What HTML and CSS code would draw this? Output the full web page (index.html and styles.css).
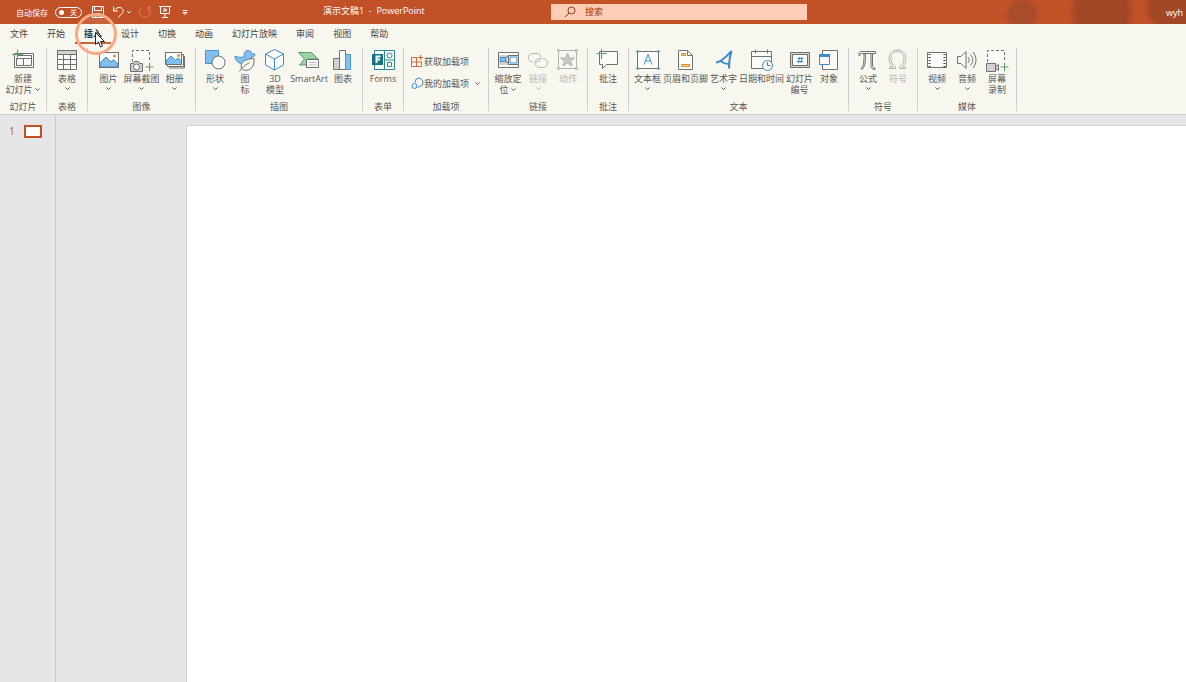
FILE: index.html
```html
<!DOCTYPE html>
<html lang="zh-CN">
<head>
<meta charset="utf-8">
<title>演示文稿1 - PowerPoint</title>
<link rel="stylesheet" href="styles.css">
</head>
<body>
<header class="titlebar">
  <div class="quick">
    <label class="autosave">自动保存
      <span class="switch"><input type="checkbox" class="switch-input"><span class="switch-text">关</span></span>
    </label>
    <button class="qbtn" aria-label="保存"><svg width="14" height="14" viewBox="0 0 14 14"><path d="M1.500 1.500h11v11h-11zM3.500 1.500v4h7v-4M4.500 12.500v-4h5v4M6.500 10.500v2"/></svg></button>
    <button class="qbtn" aria-label="撤消"><svg width="14" height="14" viewBox="0 0 14 14"><path d="M2.500 1.500v4.500h4.500M2.500 6C5 2.500 9 1.500 11 3.500c2.500 2.500 1 4.500-4 9"/></svg></button>
    <button class="qbtn slim" aria-label="撤消选项"><svg width="6" height="14" viewBox="0 0 6 14"><path d="M1 6l2 2 2-2"/></svg></button>
    <button class="qbtn faded" aria-label="恢复"><svg width="14" height="14" viewBox="0 0 14 14"><path d="M3.500 2.500A5.500 5.500 0 1 0 10.500 2.500M10 6V2h3"/></svg></button>
    <button class="qbtn" aria-label="从头开始"><svg width="14" height="14" viewBox="0 0 14 14"><path d="M1 1.500h12M2.500 1.500v7h9v-7M7 8.500v4M4 12.500h6M6 3.500v3l3-1.500z"/></svg></button>
    <button class="qbtn" aria-label="自定义快速访问工具栏"><svg width="8" height="14" viewBox="0 0 8 14"><path d="M1.500 5.500h5M2 7.500l2 2 2-2z"/></svg></button>
  </div>
  <h1 class="doc-title">演示文稿1 &nbsp;- &nbsp;PowerPoint</h1>
  <div class="search">
    <svg width="12" height="12" viewBox="0 0 12 12"><circle cx="7.500" cy="4.500" r="3.500"/><path d="M5 7L1 11"/></svg>
    <input class="search-input" type="text" placeholder="搜索" aria-label="搜索">
  </div>
  <div class="account"><span>wyh</span></div>
</header>

<nav class="tabs">
  <button class="tab">文件</button>
  <button class="tab">开始</button>
  <button class="tab active">插入</button>
  <button class="tab">设计</button>
  <button class="tab">切换</button>
  <button class="tab">动画</button>
  <button class="tab">幻灯片放映</button>
  <button class="tab">审阅</button>
  <button class="tab">视图</button>
  <button class="tab">帮助</button>
</nav>

<div class="ribbon">
  <section class="group single">
    <div class="tools">
      <button class="tool"><svg class="icon" viewBox="0 0 24 24"><path class="w" d="M3.500 4.500h19v14h-19z"/><path d="M6 6.500h14.500v10h-15V9M6 9.500h14.500M12.500 9.500v7"/><path class="green" d="M6.500 .500v10M1 5.500h11"/></svg><span>新建<br>幻灯片<svg class="chev" viewBox="0 0 7 5"><path d="M1.500 1.500l2 2 2-2"/></svg></span></button>
    </div>
    <h2 class="caption">幻灯片</h2>
  </section>
  <section class="group">
    <div class="tools">
      <button class="tool"><svg class="icon" viewBox="0 0 24 24"><path class="w" d="M2.500 1.500h19v19h-19z"/><path class="gray" d="M2.500 1.500h19v4h-19z"/><path d="M2.500 10.500h19M2.500 15.500h19M8.500 5.500v15M15.500 5.500v15"/></svg><span>表格</span><svg class="chev" viewBox="0 0 7 5"><path d="M1.500 1.500l2 2 2-2"/></svg></button>
    </div>
    <h2 class="caption">表格</h2>
  </section>
  <section class="group">
    <div class="tools">
      <button class="tool med"><svg class="icon" viewBox="0 0 24 24"><path class="w" d="M2.500 3.500h19v15h-19z"/><path class="sky" d="M3 14l6-6 5 5 2.500-2.500L21 15v3H3z"/><path d="M2.500 3.500h19v15h-19z"/><circle class="dot" cx="17.500" cy="7" r="1.500"/></svg><span>图片</span><svg class="chev" viewBox="0 0 7 5"><path d="M1.500 1.500l2 2 2-2"/></svg></button>
      <button class="tool med"><svg class="icon" viewBox="0 0 24 24"><path class="dash" d="M2.500 13V1.500h17V13"/><path class="gray" d="M.5 14.500h3l1-2h4l1 2h3v8H.5z"/><circle class="w" cx="6.500" cy="18" r="3"/><path class="green" d="M19.500 14v8M15.500 18h8"/></svg><span>屏幕截图</span><svg class="chev" viewBox="0 0 7 5"><path d="M1.500 1.500l2 2 2-2"/></svg></button>
      <button class="tool med"><svg class="icon" viewBox="0 0 24 24"><path class="w" d="M2.500 3.500h16v12h-16z"/><path class="sky" d="M3 12l5-5 4.500 4.500L15 9l3.500 3.500v3H3z"/><path d="M2.500 3.500h16v12h-16zM18.500 5.500h2v12h-16v-2M20.500 7.500h1v11.500h-15v-1.500"/><circle class="dot" cx="15.500" cy="6.500" r="1.500"/></svg><span>相册</span><svg class="chev" viewBox="0 0 7 5"><path d="M1.500 1.500l2 2 2-2"/></svg></button>
    </div>
    <h2 class="caption">图像</h2>
  </section>
  <section class="group">
    <div class="tools">
      <button class="tool"><svg class="icon" viewBox="0 0 24 24"><path class="skyline" d="M2.500 1.500h13v13h-13z"/><circle class="w" cx="15.500" cy="13.500" r="6.500"/></svg><span>形状</span><svg class="chev" viewBox="0 0 7 5"><path d="M1.500 1.500l2 2 2-2"/></svg></button>
      <button class="tool"><svg class="icon" viewBox="0 0 24 24"><path class="skyline" d="M2 7c3 1.500 6 1.500 9.500 1-1.500-3.500.5-6.500 3.500-6.500 2.500 0 3.500 1.500 4 3.500h3c0 2-1.500 3-3.500 3 0 4-2.500 7-7 7C5.500 15 2 12 2 7z"/><path class="w" d="M8.500 19c-2-6 4-9 12.500-9.500 1 8-4 13-10.500 11.500z"/><path d="M6.500 22.500c2-3.500 5-6 10-9"/></svg><span>图<br>标</span></button>
      <button class="tool"><svg class="icon" viewBox="0 0 24 24"><path class="blue w" d="M11.500 .5l9 4.500v11l-9 5-9-5V5z"/><path class="blue" d="M2.500 5l9 5 9-5M11.500 10v11"/></svg><span>3D<br>模型</span></button>
      <button class="tool wide"><svg class="icon" viewBox="0 0 24 24"><path class="leaf" d="M1.500 3.500h13l6.500 6.500h-10v6H2.500l5-6z"/><path class="w" d="M9.500 10.500h12v8h-12z"/><path class="soft" d="M12 13.500h7.500M12 16h7.500"/></svg><span>SmartArt</span></button>
      <button class="tool"><svg class="icon" viewBox="0 0 24 24"><path class="gray" d="M2.500 9.500h6v11h-6z"/><path class="w" d="M8.500 1.500h6v19h-6z"/><path class="skyline" d="M14.500 5.500h5v15h-5z"/></svg><span>图表</span></button>
    </div>
    <h2 class="caption">插图</h2>
  </section>
  <section class="group">
    <div class="tools">
      <button class="tool wide"><svg class="icon" viewBox="0 0 24 24"><path class="teal w" d="M3.500 1.500h20v19h-20zM13.500 1.500v19M13.500 11h10"/><circle class="teal" cx="18.500" cy="6.500" r="2.500"/><path class="teal" d="M16.500 13.500h4v4h-4z"/><path class="tealfill" d="M1 5h11v11H1z"/><path class="knock" d="M5.500 14V7.500h4M5.500 10.500h3.500"/></svg><span>Forms</span></button>
    </div>
    <h2 class="caption">表单</h2>
  </section>
  <section class="group">
    <div class="tools stack">
      <button class="row-tool"><svg width="13" height="13" viewBox="0 0 13 13"><path class="orange" d="M6.500 2.500h-6v9h10v-5M.5 7h10M5.500 2.500v9M9.500 0v5M7 2.500h5"/></svg><span>获取加载项</span></button>
      <button class="row-tool"><svg width="13" height="13" viewBox="0 0 13 13"><path class="blue" d="M4 5.500l1-3.500 4-1 3 3-.5 4L8 10H6.500"/><circle class="blue" cx="3.500" cy="9" r="2.500"/></svg><span>我的加载项</span><svg class="chev push" viewBox="0 0 7 5"><path d="M1.500 1.500l2 2 2-2"/></svg></button>
    </div>
    <h2 class="caption">加载项</h2>
  </section>
  <section class="group">
    <div class="tools">
      <button class="tool"><svg class="icon" viewBox="0 0 24 24"><path class="w" d="M2.500 3.500h20v15h-20z"/><path class="gray bare" d="M3 6h19v10H3z"/><path class="sky" d="M4.500 8.500h5v4h-5z"/><path class="blue" d="M9.500 8.500l4-2M9.500 12.500l4 2"/><path class="w" d="M12.500 6.500h10v9h-10z"/><path class="blue" d="M14 8h7v6h-7z"/></svg><span>缩放定<br>位<svg class="chev" viewBox="0 0 7 5"><path d="M1.500 1.500l2 2 2-2"/></svg></span></button>
      <button class="tool" disabled><svg class="icon" viewBox="0 0 24 24"><path d="M7 13C4 12.500 2.500 11 2.500 8.500c0-2.500 2-4 4.500-4h3c3 0 5 1.500 5 4 0 2.500-2 4.500-5 4.500M17 9.500c3 .5 4.500 2 4.500 4.500 0 2.500-2 4.500-4.500 4.500h-3c-3 0-5-2-5-4.500 0-2.500 2-4.500 5-4.500"/></svg><span>链接</span><svg class="chev" viewBox="0 0 7 5"><path d="M1.500 1.500l2 2 2-2"/></svg></button>
      <button class="tool" disabled><svg class="icon" viewBox="0 0 24 24"><path d="M2.500 1.500h18v18h-18z"/><path class="fade" d="M11.500 4l2 5h5l-4 3 1.500 5-4.500-3L7 17l1.500-5-4-3h5z"/><path class="w" d="M1.500 .5h2v2h-2zM19.500 .5h2v2h-2zM1.500 18.500h2v2h-2zM19.500 18.500h2v2h-2z"/></svg><span>动作</span></button>
    </div>
    <h2 class="caption">链接</h2>
  </section>
  <section class="group">
    <div class="tools">
      <button class="tool"><svg class="icon" viewBox="0 0 24 24"><path class="w" d="M3.500 2.500h18v13h-11l-4 4v-4h-3z"/><path class="green" d="M5.500 0v10M.5 4.500h10"/></svg><span>批注</span></button>
    </div>
    <h2 class="caption">批注</h2>
  </section>
  <section class="group">
    <div class="tools">
      <button class="tool narrow"><svg class="icon" viewBox="0 0 24 24"><path class="w" d="M1.500 2.500h21v17h-21z"/><path class="blue" d="M8 15.500l4-10 4 10M9.500 12h5"/><path class="bluefill" d="M.5 1.500h2v2h-2zM21.500 1.500h2v2h-2zM.5 18.500h2v2h-2zM21.500 18.500h2v2h-2z"/></svg><span>文本框</span><svg class="chev" viewBox="0 0 7 5"><path d="M1.500 1.500l2 2 2-2"/></svg></button>
      <button class="tool long"><svg class="icon" viewBox="0 0 24 24"><path class="w" d="M4.500 1.500h9l5 5v14h-14zM13.500 1.500v5h5"/><path class="amber" d="M7.500 4.500h4v2h-4zM7.500 15.500h8v2h-8z"/></svg><span>页眉和页脚</span></button>
      <button class="tool narrow"><svg class="icon" viewBox="0 0 24 24"><path class="art" d="M4 13.500C10 13 15 7 19.500 2c-2 6-2.500 12-2.500 17.500M8 11c2 2.500 5 4 9 4"/></svg><span>艺术字</span><svg class="chev" viewBox="0 0 7 5"><path d="M1.500 1.500l2 2 2-2"/></svg></button>
      <button class="tool long"><svg class="icon" viewBox="0 0 24 24"><path class="w" d="M1.500 2.500h20v17h-20zM1.500 7.500h20M5.500 .5v4M17.500 .5v4"/><circle class="blue w" cx="17.500" cy="16.500" r="5"/><path d="M17.500 13V16.500h3"/></svg><span>日期和时间</span></button>
      <button class="tool narrow"><svg class="icon" viewBox="0 0 24 24"><path class="gray" d="M2.500 3.500h19v15h-19z"/><path class="w" d="M4.500 5.500h15v11h-15z"/><path class="blue" d="M11.500 8l-1 6M14 8l-1 6M9.500 9.500h6M9 12.500h6"/></svg><span>幻灯片<br>编号</span></button>
      <button class="tool"><svg class="icon" viewBox="0 0 24 24"><path class="w" d="M5.500 1.500h15v19h-15z"/><path class="blue w" d="M2.500 5.500h10v10h-10z"/><path class="bluefill" d="M2 5h11v3H2z"/></svg><span>对象</span></button>
    </div>
    <h2 class="caption">文本</h2>
  </section>
  <section class="group">
    <div class="tools">
      <button class="tool"><svg class="icon" viewBox="0 0 24 24"><path d="M3 6.500v-2c0-1.500 1-2 2-2h14.500v2H5.500c-1.500 0-1.500 1-1.500 2zM8 4.500c0 8 0 12-3 15.500h1.500c3-4 3-8 3-15.500M15 4.500v12c0 3 1.500 4 4 4v-1.500c-2 0-2.500-1-2.500-3v-11.500"/></svg><span>公式</span><svg class="chev" viewBox="0 0 7 5"><path d="M1.500 1.500l2 2 2-2"/></svg></button>
      <button class="tool" disabled><svg class="icon" viewBox="0 0 24 24"><path d="M3.500 19.500H9.500v-2C6.500 15.500 5 13 5 9.500c0-4 2.500-7 6.500-7S18 5.500 18 9.500c0 3.500-1.500 6-4.500 8v2h6v-1.500H16c2.500-2 4-5 4-8.500 0-5-3.500-8.500-8.500-8.500S3 4.500 3 9.500C3 13 4.500 16 7 18H3.500z"/></svg><span>符号</span></button>
    </div>
    <h2 class="caption">符号</h2>
  </section>
  <section class="group">
    <div class="tools">
      <button class="tool"><svg class="icon" viewBox="0 0 24 24"><path class="w" d="M2.500 3.500h19v15h-19z"/><path class="film" d="M4.500 5v13M19.500 5v13"/></svg><span>视频</span><svg class="chev" viewBox="0 0 7 5"><path d="M1.500 1.500l2 2 2-2"/></svg></button>
      <button class="tool"><svg class="icon" viewBox="0 0 24 24"><path class="w" d="M2.500 7.500H6l5-5v17l-5-5H2.500z"/><path d="M13 8c1.500 2 1.500 4 0 6M15.500 5.500c3 3.500 3 7.500 0 11M18 3c4 5 4 11 0 16"/></svg><span>音频</span><svg class="chev" viewBox="0 0 7 5"><path d="M1.500 1.500l2 2 2-2"/></svg></button>
      <button class="tool"><svg class="icon" viewBox="0 0 24 24"><path class="dash" d="M2.500 13V1.500h17V13"/><path class="gray" d="M1.500 14.500h9v8h-9zM10.500 17.500l3-2v6l-3-2z"/><path class="green" d="M19.500 14v8M15.500 18h8"/></svg><span>屏幕<br>录制</span></button>
    </div>
    <h2 class="caption">媒体</h2>
  </section>
</div>

<main class="workspace">
  <aside class="thumbs">
    <button class="thumb"><span>1</span><span class="preview"></span></button>
  </aside>
  <div class="stage"><div class="slide"></div></div>
</main>

<svg class="pointer" width="44" height="44" viewBox="0 0 44 44">
  <circle cx="22" cy="22" r="19.500"/>
  <path d="M21.500 20.500v12l3-2.500 2 5 2-1-2-4.500h4z"/>
</svg>
</body>
</html>
```
FILE: styles.css
```css
* { box-sizing: border-box; }

body {
  margin: 0;
  min-height: 100vh;
  display: flex;
  flex-direction: column;
  background: #e6e6e6;
  color: #5a5856;
  font: 9px/11px "Open Sans", "Noto Sans CJK SC", sans-serif;
  overflow-x: hidden;
}

button {
  margin: 0;
  padding: 0;
  border: 0;
  background: none;
  color: inherit;
  font: inherit;
}

svg { fill: none; stroke: #707070; stroke-width: 1; flex: none; }
h1, h2 { margin: 0; font: inherit; }

/* Title bar */
.titlebar {
  display: grid;
  grid-template-columns: 323fr 228fr 256fr 379fr;
  align-items: center;
  height: 24px;
  color: #fff;
  background:
    radial-gradient(circle at 1022px 15px, #a84c29 12px, transparent 18px),
    radial-gradient(ellipse at 1042px 17px, #a84c29 8px, transparent 16px),
    radial-gradient(circle at 1102px 12px, #a34826 26px, transparent 34px),
    radial-gradient(circle at 1174px 6px, #a34826 24px, transparent 30px),
    #c35128;
}

.quick { display: flex; align-items: center; padding-left: 16px; }
.quick svg { stroke: #fff; }
.autosave { display: flex; align-items: center; gap: 7px; font-size: 8px; margin-right: 9px; white-space: nowrap; }
.switch {
  display: flex;
  align-items: center;
  justify-content: space-between;
  width: 27px;
  height: 11px;
  padding: 0 4px 0 3px;
  border: 1px solid #fff;
  border-radius: 6px;
}
.switch-input { appearance: none; width: 5px; height: 5px; margin: 0; border-radius: 50%; background: #fff; }
.switch-text { font-size: 7px; line-height: 9px; }
.qbtn { display: flex; margin-right: 6px; }
.qbtn.slim { margin-left: -5px; }
.qbtn.faded svg { stroke: #e67956; }
.quick .qbtn:last-child { margin-left: 3px; }

.doc-title { white-space: pre; line-height: 22px; align-self: start; }

.search { display: flex; align-items: center; gap: 9px; height: 16px; padding-left: 13px; background: #ffcdb5; }
.search svg { stroke: #8f3a1c; }
.search-input { flex: 1; min-width: 0; padding: 0 0 2px; border: 0; outline: 0; background: none; font: inherit; color: #8f3a1c; }
.search-input::placeholder { color: #8f3a1c; opacity: 1; }
.account { padding-right: 3px; text-align: right; }

/* Tabs */
.tabs { display: flex; gap: 1px; height: 20px; padding-left: 1px; background: #f7f6ef; color: #444; }
.tab { padding: 0 9px; border-bottom: 2px solid transparent; white-space: nowrap; }
.tab.active { border-color: #c35128; color: #222; font-weight: 700; }

/* Ribbon */
.ribbon {
  display: flex;
  height: 71px;
  padding: 4px 0 3px;
  border-bottom: 1px solid #d2cdc9;
  background: #f7f6ef;
}
.group {
  display: flex;
  flex-direction: column;
  justify-content: space-between;
  padding: 0 4px;
  border-right: 1px solid #d0cfcf;
}
.tools { display: flex; flex: 1; justify-content: center; align-items: flex-start; }
.tool {
  display: flex;
  flex-direction: column;
  align-items: center;
  width: 30px;
  padding-top: 1px;
  white-space: nowrap;
}
.tool.narrow { width: 29px; }
.tool.med { width: 33px; }
.tool.wide { width: 38px; }
.tool.long { width: 47px; }
.group > .tools > .tool:only-child { width: 32px; }
.group.single > .tools > .tool:only-child { width: 38px; }
.tool:disabled { color: #b9b8b6; }
.tool:disabled svg { stroke: #b5b4b3; }
.tool .icon { width: 24px; height: 24px; }
.chev { width: 7px; height: 5px; stroke: #555; }
.tool > .chev { margin-top: 2px; }
.tool span .chev { margin-left: 1px; vertical-align: 1px; }
.caption { text-align: center; line-height: 8px; }

.stack { flex-direction: column; justify-content: flex-start; gap: 9px; padding: 7px 3px 0; width: 76px; }
.row-tool { display: flex; align-items: center; width: 100%; height: 13px; white-space: nowrap; }
.push { margin-left: auto; }

/* Icon paints */
.w { fill: #fbfbfa; }
.gray { fill: #d3d1cf; }
.bare { stroke: none; }
.green { stroke: #4fa568; }
.blue { stroke: #3b8ccb; }
.bluefill { fill: #3b8ccb; stroke: none; }
.sky { fill: #83beec; stroke: #3b8ccb; }
.skyline { fill: #83beec; stroke: #4a94cf; }
.dot { fill: #e58a3a; stroke: none; }
.dash { fill: #fbfbfa; stroke-dasharray: 3 2; }
.leaf { fill: #9dd3a4; stroke: #4fa568; }
.soft { stroke: #bbb; }
.teal { stroke: #2b8a95; }
.tealfill { fill: #10757f; stroke: none; }
.knock { stroke: #fff; stroke-width: 2; }
.orange { stroke: #d5653b; }
.amber { fill: #f8d7a0; stroke: #dd8a2b; }
.art { stroke: #3b8ccb; stroke-width: 2; }
.fade { fill: #cac9c8; }
.film { stroke: #333; stroke-width: 2; stroke-dasharray: 1 2; }

/* Editing area */
.workspace { display: flex; flex: 1; }
.thumbs { width: 56px; padding: 10px 0 0 9px; border-right: 1px solid #c9c9c9; }
.thumb { display: flex; align-items: center; gap: 9px; color: #c35128; font-size: 10px; }
.preview { width: 18px; height: 13px; border: 2px solid #c35128; background: #fff; }
.stage { display: flex; flex: 1; padding: 10px 0 0 130px; }
.slide { flex: 1; border: solid #d2d2d2; border-width: 1px 0 0 1px; background: #fff; }

/* Click highlight and mouse pointer over the page */
.pointer { position: absolute; left: 74px; top: 12px; pointer-events: none; }
.pointer circle { stroke: #f7a980; stroke-width: 3; fill: #fff; fill-opacity: 0.1; }
.pointer path { fill: #fff; stroke: #222; }
```
